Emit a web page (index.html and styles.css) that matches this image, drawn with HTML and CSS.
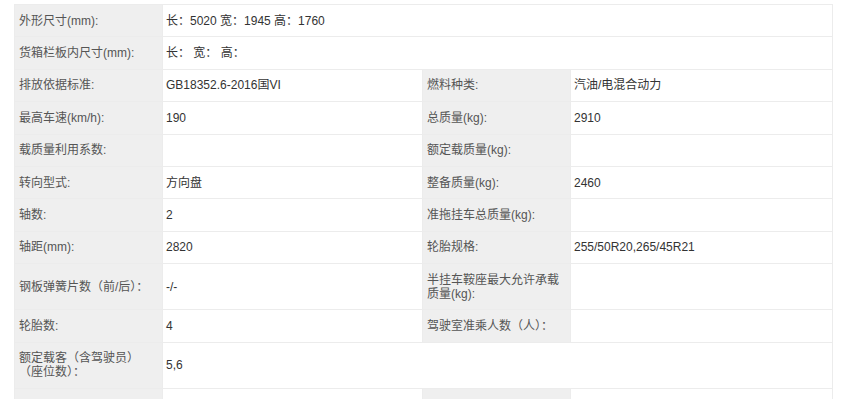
FILE: index.html
```html
<!DOCTYPE html>
<html lang="zh-CN">
<head>
<meta charset="utf-8">
<title>参数</title>
<link rel="stylesheet" href="styles.css">
</head>
<body>
<table class="spec">
  <colgroup>
    <col class="c-label"><col class="c-value"><col class="c-label2"><col class="c-value2">
  </colgroup>
  <tbody>
    <tr><th>外形尺寸(mm):</th><td colspan="3">长：5020 宽：1945 高：1760</td></tr>
    <tr><th>货箱栏板内尺寸(mm):</th><td colspan="3">长：&nbsp;宽：&nbsp;高：</td></tr>
    <tr><th>排放依据标准:</th><td>GB18352.6-2016国VI</td><th>燃料种类:</th><td>汽油/电混合动力</td></tr>
    <tr><th>最高车速(km/h):</th><td>190</td><th>总质量(kg):</th><td>2910</td></tr>
    <tr><th>载质量利用系数:</th><td></td><th>额定载质量(kg):</th><td></td></tr>
    <tr><th>转向型式:</th><td>方向盘</td><th>整备质量(kg):</th><td>2460</td></tr>
    <tr><th>轴数:</th><td>2</td><th>准拖挂车总质量(kg):</th><td></td></tr>
    <tr><th>轴距(mm):</th><td>2820</td><th>轮胎规格:</th><td>255/50R20,265/45R21</td></tr>
    <tr><th>钢板弹簧片数（前/后）：</th><td>-/-</td><th>半挂车鞍座最大允许承载质量(kg):</th><td></td></tr>
    <tr><th>轮胎数:</th><td>4</td><th>驾驶室准乘人数（人）：</th><td></td></tr>
    <tr><th>额定载客（含驾驶员）<br>（座位数）：</th><td colspan="3">5,6</td></tr>
    <tr><th>&nbsp;</th><td></td><th>&nbsp;</th><td></td></tr>
  </tbody>
</table>
</body>
</html>
```
FILE: styles.css
```css
html, body {
  margin: 0;
  padding: 0;
  background: #fff;
}
body {
  padding: 4px 0 0 14px;
  font-family: "Liberation Sans", "Noto Sans CJK SC", sans-serif;
  font-size: 12px;
  color: #333;
}
.spec {
  border-collapse: collapse;
  table-layout: fixed;
  width: 818px;
}
.c-label { width: 148px; }
.c-value { width: 260px; }
.c-label2 { width: 148px; }
.c-value2 { width: 262px; }
.spec th,
.spec td {
  border: 1px solid #ececec;
  padding: 8.7px 5px;
  line-height: 14px;
  text-align: left;
  vertical-align: middle;
  font-weight: normal;
}
.spec td {
  padding-left: 3px;
  background: #fff;
  color: #333;
}
.spec th {
  padding-left: 4px;
  background: #efefef;
  color: #555;
}
```
